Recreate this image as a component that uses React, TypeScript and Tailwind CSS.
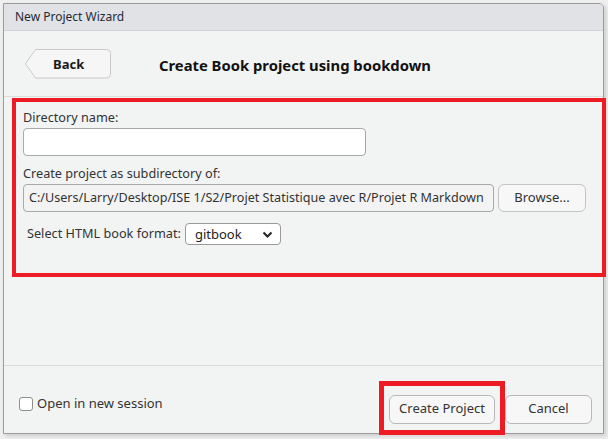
import React from "react";

const font = { fontFamily: '"Segoe UI", "Noto Sans", "Open Sans", sans-serif' };

function BackButton() {
  return (
    <div className="relative w-[86px] h-[30px]">
      <svg className="absolute inset-0" width="86" height="30" viewBox="0 0 86 30">
        <path
          d="M10.5 0.5 H81.5 a4 4 0 0 1 4 4 V25 a4 4 0 0 1 -4 4 H10.5 L0.5 14.75 Z"
          fill="#f6f6f6"
          stroke="#c9c9c9"
        />
      </svg>
      <span className="absolute left-[28px] top-0 h-[30px] leading-[30px] text-[13px] font-bold text-[#1a1a1a]">Back</span>
    </div>
  );
}

export default function App() {
  return (
    <div className="w-[608px] h-[439px] bg-[#efefef] relative overflow-hidden" style={font}>
      <div className="pt-[3px] pl-[3px]">
        <div className="w-[601px] h-[431px] border border-[#9c9c9c] rounded-tr-[5px] bg-[#f2f3f3] flex flex-col shadow-[2px_2px_4px_rgba(0,0,0,0.15)]">
          {/* title bar */}
          <div className="h-[27px] bg-[#e1e2e6] border-b border-[#d2d3d6] rounded-tr-[4px] flex items-center pl-[11px] text-[12px] text-[#1e2a38]">
            New Project Wizard
          </div>
          {/* header */}
          <div className="h-[66px] border-b border-[#dcdcdc] flex items-center pl-[21px]">
            <BackButton />
            <div className="ml-[48px] mt-[3px] text-[14.8px] font-bold text-[#111]">Create Book project using bookdown</div>
          </div>
          {/* red annotated panel */}
          <div className="mt-[1px] ml-[8px] mr-[-3px] border-[4px] border-[#ed1c24] h-[179px] pl-[7px] pt-[7px] text-[13px] text-[#333]">
            <div className="h-[16px] leading-[16px] text-[12.7px]">Directory name:</div>
            <div className="mt-[3px] w-[343px] h-[28px] bg-white border border-[#a9a9a9] rounded-[4px]" />
            <div className="mt-[9px] h-[16px] leading-[16px] text-[12.7px]">Create project as subdirectory of:</div>
            <div className="mt-[3px] flex items-center">
              <div className="w-[471px] h-[28px] border border-[#a9a9a9] rounded-[4px] bg-[#f3f3f3] overflow-hidden whitespace-nowrap pl-[5px] leading-[26px] text-[12.6px] text-[#333]">
                C:/Users/Larry/Desktop/ISE 1/S2/Projet Statistique avec R/Projet R Markdown
              </div>
              <div className="ml-[4px] w-[88px] h-[28px] border border-[#c4c4c4] rounded-[6px] bg-[#f7f7f7] flex items-center justify-center text-[#333]">
                Browse...
              </div>
            </div>
            <div className="mt-[11px] flex items-center pl-[4px]">
              <span className="text-[12.7px]">Select HTML book format:</span>
              <div className="ml-[4px] w-[96px] h-[22px] bg-white border border-[#9a9a9a] rounded-[4px] flex items-center pl-[9px] pr-[7px] justify-between text-[#222]">
                <span className="leading-[20px]">gitbook</span>
                <svg width="11" height="7" viewBox="0 0 11 7">
                  <path d="M1.5 1.5 L5.5 5.5 L9.5 1.5" fill="none" stroke="#222" strokeWidth="2" />
                </svg>
              </div>
            </div>
          </div>
          <div className="flex-1" />
          {/* footer */}
          <div className="h-[68px] border-t border-[#d9d9d9] flex items-center justify-between pl-[15px] pr-[11px]">
            <div className="flex items-center mt-[9px] text-[13px] text-[#333]">
              <div className="w-[14px] h-[14px] bg-white border border-[#8f8f8f] rounded-[3px]" />
              <span className="ml-[4px]">Open in new session</span>
            </div>
            <div className="flex items-center mt-[16px]">
              <div className="border-[5px] border-[#ed1c24] px-[5px] pt-[9px] pb-[6px]">
                <div className="w-[106px] h-[29px] border border-[#b9b9b9] rounded-[6px] bg-[#f7f7f7] flex items-center justify-center text-[13px] text-[#333]">
                  Create Project
                </div>
              </div>
              <div className="w-[87px] h-[29px] border border-[#b9b9b9] rounded-[6px] bg-[#f7f7f7] flex items-center justify-center text-[13px] text-[#333] mt-[3px]">
                Cancel
              </div>
            </div>
          </div>
        </div>
      </div>
    </div>
  );
}
